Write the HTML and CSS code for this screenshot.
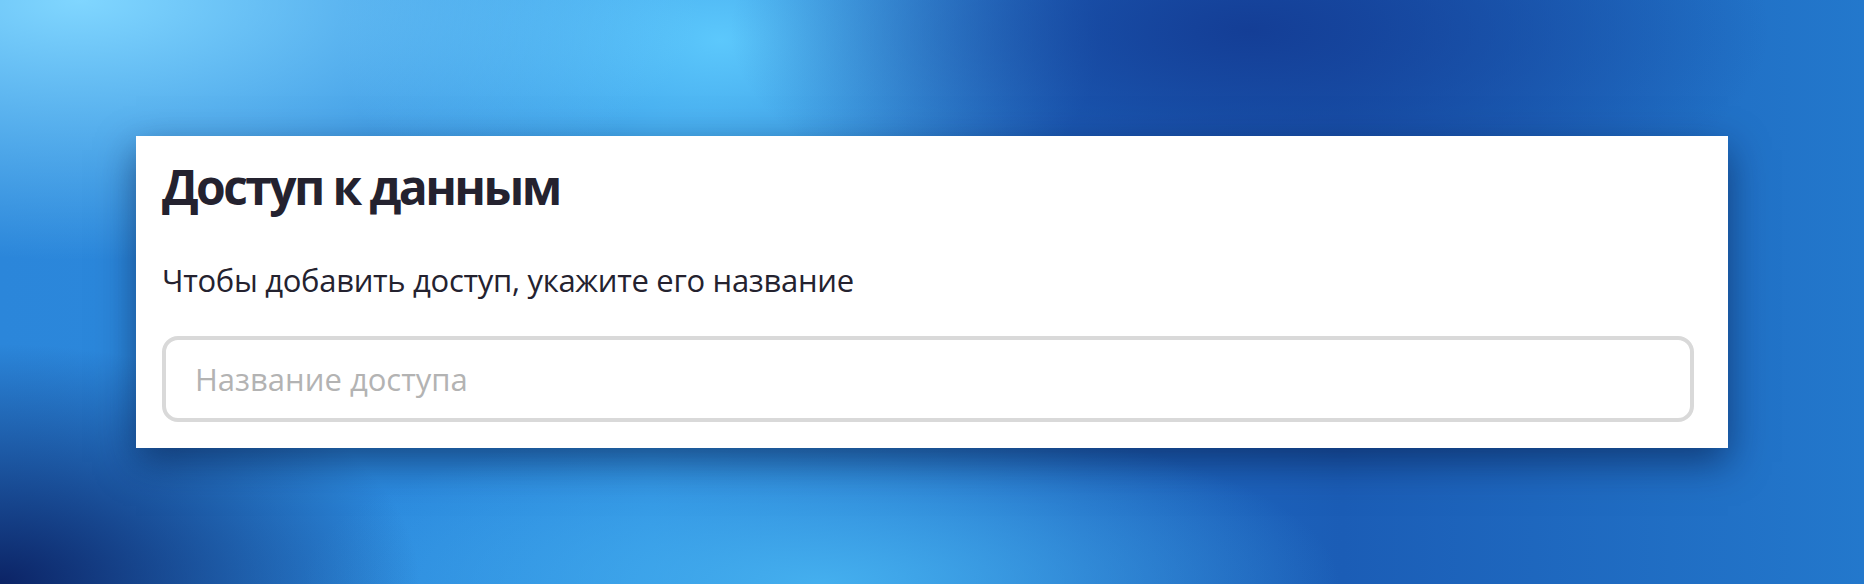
FILE: index.html
```html
<!DOCTYPE html>
<html lang="ru">
<head>
<meta charset="utf-8">
<title>Доступ к данным</title>
<link rel="stylesheet" href="styles.css">
</head>
<body>
<div class="stage">
  <section class="card">
    <h1 class="card-title">Доступ к данным</h1>
    <p class="card-hint">Чтобы добавить доступ, укажите его название</p>
    <div class="field">
      <input class="field-input" type="text" placeholder="Название доступа">
    </div>
  </section>
</div>
</body>
</html>
```
FILE: styles.css
```css
* { box-sizing: border-box; }
html, body { margin: 0; padding: 0; }
body {
  width: 1864px;
  height: 584px;
  overflow: hidden;
  font-family: "Open Sans", "Noto Sans", sans-serif;
  background:
    radial-gradient(ellipse 420px 240px at 0px 584px, rgba(10,30,95,0.95), rgba(10,30,95,0) 100%),
    radial-gradient(ellipse 520px 220px at 1250px 30px, rgba(20,62,150,1), rgba(20,62,150,0) 100%),
    radial-gradient(ellipse 520px 170px at 820px 584px, rgba(70,178,240,0.95), rgba(70,178,240,0) 100%),
    radial-gradient(ellipse 620px 260px at 80px 0px, rgba(128,214,255,1), rgba(128,214,255,0) 100%),
    radial-gradient(ellipse 380px 230px at 720px 40px, rgba(92,200,252,1), rgba(92,200,252,0) 100%),
    linear-gradient(90deg, #2b86da 0%, #2c8ce0 35%, #1f68c2 58%, #1b5db6 72%, #2378cc 100%);
}
.stage {
  padding: 136px 136px 0 136px;
}
.card {
  width: 1592px;
  height: 312px;
  background: #ffffff;
  padding: 19px 34px 0 26px;
  box-shadow: 0 14px 36px rgba(5, 20, 60, 0.55);
}
.card-title {
  margin: 0;
  font-size: 48px;
  line-height: 64px;
  font-weight: 700;
  color: #24222f;
  letter-spacing: -2.6px;
}
.card-hint {
  margin: 41px 0 0 0;
  font-size: 31px;
  line-height: 40px;
  color: #24222f;
  letter-spacing: -0.3px;
}
.field {
  margin-top: 36px;
}
.field-input {
  display: block;
  width: 100%;
  height: 86px;
  border: 4px solid #d9d9d9;
  border-radius: 16px;
  padding: 0 29px;
  font-family: inherit;
  font-size: 31px;
  color: #24222f;
  background: #ffffff;
  outline: none;
}
.field-input::placeholder {
  color: #b3b3b3;
}
```
